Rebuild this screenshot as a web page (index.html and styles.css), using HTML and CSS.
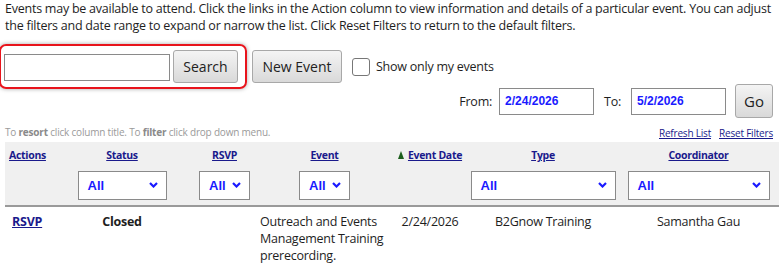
FILE: index.html
```html
<!DOCTYPE html>
<html lang="en">
<head>
    <meta charset="UTF-8">
    <title>Events</title>
    <link rel="stylesheet" href="styles.css">
</head>
<body>

    <p class="intro">Events may be available to attend. Click the links in the Action column to view information and details of a particular event. You can adjust the filters and date range to expand or narrow the list. Click Reset Filters to return to the default filters.</p>

    <div class="toolbar">
        <div class="search-box">
            <input type="text" class="search-input">
            <button class="btn btn-search">Search</button>
        </div>
        <button class="btn btn-new">New Event</button>
        <label class="mine">
            <span class="check"></span>
            Show only my events
        </label>
    </div>

    <div class="dates">
        <span class="lbl">From:</span>
        <input type="text" class="date" value="2/24/2026">
        <span class="lbl lbl-to">To:</span>
        <input type="text" class="date" value="5/2/2026">
        <button class="btn btn-go">Go</button>
    </div>

    <div class="hint-row">
        <span class="hint">To <b>resort</b> click column title. To <b>filter</b> click drop down menu.</span>
        <span class="tools"><a href="#">Refresh List</a><a href="#">Reset Filters</a></span>
    </div>

    <table class="grid">
        <colgroup>
            <col style="width:47px">
            <col style="width:140px">
            <col style="width:65px">
            <col style="width:135px">
            <col style="width:76px">
            <col style="width:150px">
            <col style="width:161px">
        </colgroup>
        <thead>
            <tr class="titles">
                <th class="left"><a href="#">Actions</a></th>
                <th><a href="#">Status</a></th>
                <th><a href="#">RSVP</a></th>
                <th><a href="#">Event</a></th>
                <th><span class="sort"></span><a href="#">Event Date</a></th>
                <th><a href="#">Type</a></th>
                <th><a href="#">Coordinator</a></th>
            </tr>
            <tr class="filters">
                <th></th>
                <th><div class="sel sel-status">All<svg class="chev" viewBox="0 0 9 6"><polyline points="1,1 4.5,4.5 8,1"/></svg></div></th>
                <th><div class="sel sel-small">All<svg class="chev" viewBox="0 0 9 6"><polyline points="1,1 4.5,4.5 8,1"/></svg></div></th>
                <th><div class="sel sel-small">All<svg class="chev" viewBox="0 0 9 6"><polyline points="1,1 4.5,4.5 8,1"/></svg></div></th>
                <th></th>
                <th><div class="sel sel-type">All<svg class="chev" viewBox="0 0 9 6"><polyline points="1,1 4.5,4.5 8,1"/></svg></div></th>
                <th><div class="sel sel-coord">All<svg class="chev" viewBox="0 0 9 6"><polyline points="1,1 4.5,4.5 8,1"/></svg></div></th>
            </tr>
        </thead>
        <tbody>
            <tr>
                <td class="left"><a href="#" class="rsvp">RSVP</a></td>
                <td><b>Closed</b></td>
                <td></td>
                <td class="event">Outreach and Events Management Training prerecording.</td>
                <td>2/24/2026</td>
                <td>B2Gnow Training</td>
                <td>Samantha Gau</td>
            </tr>
        </tbody>
    </table>

</body>
</html>
```

FILE: styles.css
```css
body {
    font-family: 'Open Sans', sans-serif;
    font-size: 12.5px;
    letter-spacing: -0.24px;
    color: #1e1e1e;
    margin: 0;
    background: white;
}

.intro {
    margin: 0;
    padding: 0 5px;
    line-height: 17px;
}

.toolbar {
    display: flex;
    align-items: center;
    margin-top: 10px;
}

.search-box {
    display: flex;
    align-items: center;
    gap: 3px;
    padding: 4px 7px 5px 3px;
    border: 2px solid #e8141c;
    border-radius: 7px;
    box-shadow: 0 0 4px rgba(0, 0, 0, 0.35);
    height: 32px;
    margin-left: -1px;
}

.search-input {
    width: 164px;
    height: 25px;
    margin: 2px 0 0;
    padding: 0;
    border: 1px solid #8a8a8a;
}

.btn {
    font-family: 'Open Sans', sans-serif;
    font-size: 14px;
    letter-spacing: 0;
    color: #222;
    background: linear-gradient(#f4f4f4, #d9d9d9);
    border: 1px solid #a8a8a8;
    border-radius: 3px;
    height: 33px;
    padding: 0;
    cursor: pointer;
}

.btn-search {
    width: 65px;
}

.btn-new {
    width: 90px;
    margin-left: 5px;
}

.mine {
    display: flex;
    align-items: center;
    margin-left: 10px;
}

.check {
    width: 16px;
    height: 16px;
    border: 1px solid #777;
    border-radius: 3px;
    margin-right: 6px;
}

.dates {
    display: flex;
    align-items: center;
    justify-content: flex-end;
    padding-right: 6px;
    margin-top: -5px;
}

.lbl {
    margin-right: 7px;
}

.lbl-to {
    margin-left: 10px;
    margin-right: 10px;
}

.date {
    box-sizing: border-box;
    width: 95px;
    height: 27px;
    padding: 0 0 0 5px;
    margin: 0;
    border: 1px solid #8a8a8a;
    font-family: 'Liberation Sans', sans-serif;
    font-weight: bold;
    font-size: 12px;
    color: #1a1aff;
}

.btn-go {
    width: 38px;
    height: 34px;
    margin-left: 9px;
    font-size: 15px;
}

.hint-row {
    display: flex;
    justify-content: space-between;
    align-items: center;
    padding: 0 6px 0 5px;
    margin-top: 6px;
    height: 16px;
}

.hint {
    font-size: 10px;
    color: #9a9a9a;
    letter-spacing: -0.2px;
}

.hint b {
    color: #8a8a8a;
}

.tools a {
    font-size: 10px;
    color: #1a1a8c;
    margin-left: 8px;
    letter-spacing: -0.2px;
}

.grid {
    margin: 2px 0 0 5px;
    width: 774px;
    table-layout: fixed;
    border-collapse: collapse;
}

.grid thead {
    background: #f0f0f0;
}

.grid th {
    padding: 0;
    text-align: center;
    font-size: 10.5px;
    font-weight: bold;
    letter-spacing: -0.3px;
}

.grid th a {
    color: #1a1a8c;
}

.grid th.left {
    text-align: left;
    padding-left: 4px;
}

.titles th {
    height: 24px;
    padding-top: 1px;
}

.sort {
    display: inline-block;
    width: 0;
    height: 0;
    border-left: 3px solid transparent;
    border-right: 3px solid transparent;
    border-bottom: 8px solid #1c5e1c;
    margin-right: 4px;
}

.filters th {
    height: 36px;
    padding-bottom: 2px;
    border-bottom: 2px solid #9a9a9a;
}

.sel {
    display: inline-flex;
    align-items: center;
    justify-content: space-between;
    box-sizing: border-box;
    height: 29px;
    padding: 0 8px 0 9px;
    background: white;
    border: 1px solid #8a8a8a;
    font-family: 'Liberation Sans', sans-serif;
    font-size: 13px;
    letter-spacing: 0;
    color: #1a1aff;
    text-align: left;
    vertical-align: middle;
}

.sel-status {
    width: 89px;
}

.sel-small {
    width: 51px;
}

.sel-type {
    width: 145px;
}

.sel-coord {
    width: 142px;
}

.chev {
    width: 9px;
    height: 6px;
    fill: none;
    stroke: #1a1aff;
    stroke-width: 2.2;
}

.grid td {
    vertical-align: top;
    text-align: center;
    padding: 6px 0 0;
    line-height: 17px;
}

.grid td.left {
    text-align: left;
    padding-left: 7px;
}

.grid td.event {
    text-align: left;
    padding-left: 3px;
}

.rsvp {
    color: #1a1a8c;
    font-weight: bold;
}
```
